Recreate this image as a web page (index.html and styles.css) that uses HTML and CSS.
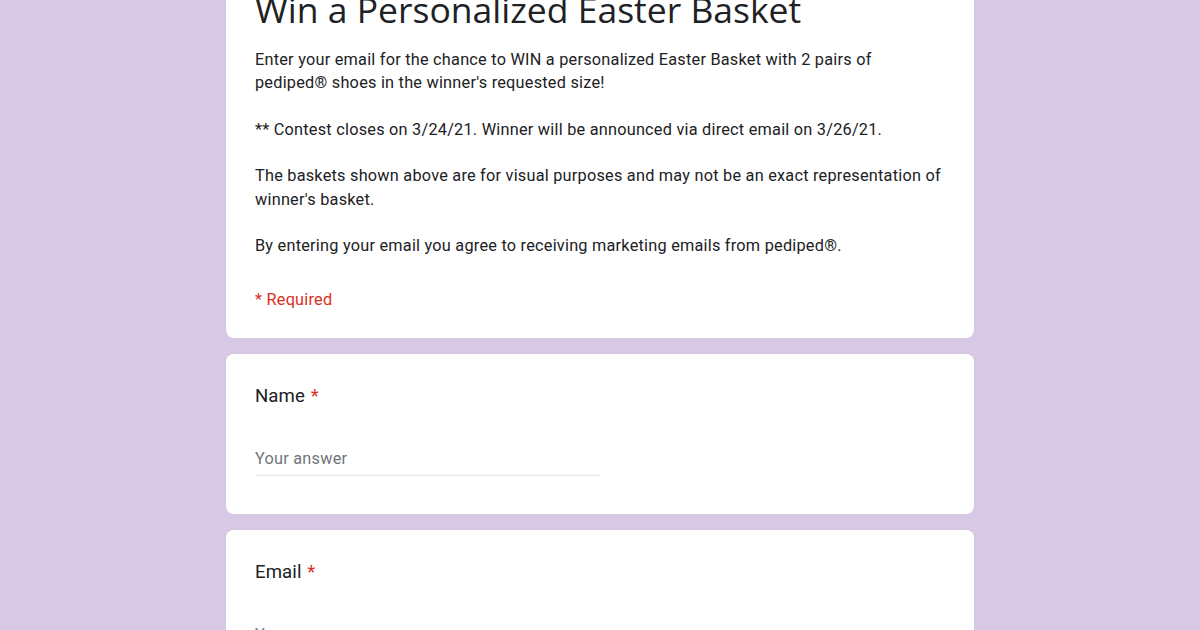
FILE: index.html
```html
<!DOCTYPE html>
<html lang="en">
<head>
    <meta charset="UTF-8">
    <title>Win a Personalized Easter Basket</title>
    <link rel="stylesheet" href="styles.css">
</head>
<body>
    <div class="form">
        <div class="card header-card">
            <h1 class="form-title">Win a Personalized Easter Basket</h1>
            <div class="description">
                <p>Enter your email for the chance to WIN a personalized Easter Basket with 2 pairs of pediped® shoes in the winner's requested size!</p>
                <p>** Contest closes on 3/24/21. Winner will be announced via direct email on 3/26/21.</p>
                <p>The baskets shown above are for visual purposes and may not be an exact representation of winner's basket.</p>
                <p>By entering your email you agree to receiving marketing emails from pediped®.</p>
            </div>
            <div class="required-note">* Required</div>
        </div>

        <div class="card question">
            <div class="question-title">Name <span class="star">*</span></div>
            <div class="answer">
                <input type="text" placeholder="Your answer">
            </div>
        </div>

        <div class="card question">
            <div class="question-title">Email <span class="star">*</span></div>
            <div class="answer">
                <input type="email" placeholder="Your answer">
            </div>
        </div>
    </div>
</body>
</html>
```

FILE: styles.css
```css
body {
    margin: 0;
    background-color: #d7c9e3;
    font-family: Roboto, "Liberation Sans", Arial, sans-serif;
    color: #202124;
}
.form {
    width: 748px;
    margin: -11px auto 0;
    display: flex;
    flex-direction: column;
    gap: 16px;
}
.card {
    background-color: #fff;
    border-radius: 8px;
    padding: 0 29px;
}
.header-card {
    padding-bottom: 27px;
}
.form-title {
    margin: 0;
    font-family: "Open Sans", Roboto, sans-serif;
    font-weight: 400;
    font-size: 35.5px;
    line-height: 40px;
    color: #202124;
}
.description {
    margin-top: 19px;
    font-size: 16.3px;
    line-height: 23.3px;
    letter-spacing: 0.23px;
}
.description p {
    margin: 0 0 23.3px;
}
.description p:last-child {
    margin-bottom: 0;
}
.required-note {
    margin-top: 30px;
    font-size: 16.3px;
    line-height: 23.3px;
    letter-spacing: 0.23px;
    color: #d93025;
}
.question {
    padding-top: 28px;
    padding-bottom: 38px;
}
.question-title {
    font-size: 18.6px;
    line-height: 28px;
    letter-spacing: 0.1px;
}
.star {
    color: #d93025;
    margin-left: 1px;
}
.answer {
    margin-top: 37px;
    width: 50%;
}
.answer input {
    display: block;
    width: 100%;
    box-sizing: border-box;
    border: none;
    border-bottom: 1px solid #e6e6e9;
    padding: 0 0 4px;
    font-family: Roboto, sans-serif;
    font-size: 16.3px;
    line-height: 24px;
    height: 29px;
    letter-spacing: 0.23px;
    color: #202124;
    outline: none;
    background: transparent;
}
.answer input::placeholder {
    color: #70757a;
}
```
